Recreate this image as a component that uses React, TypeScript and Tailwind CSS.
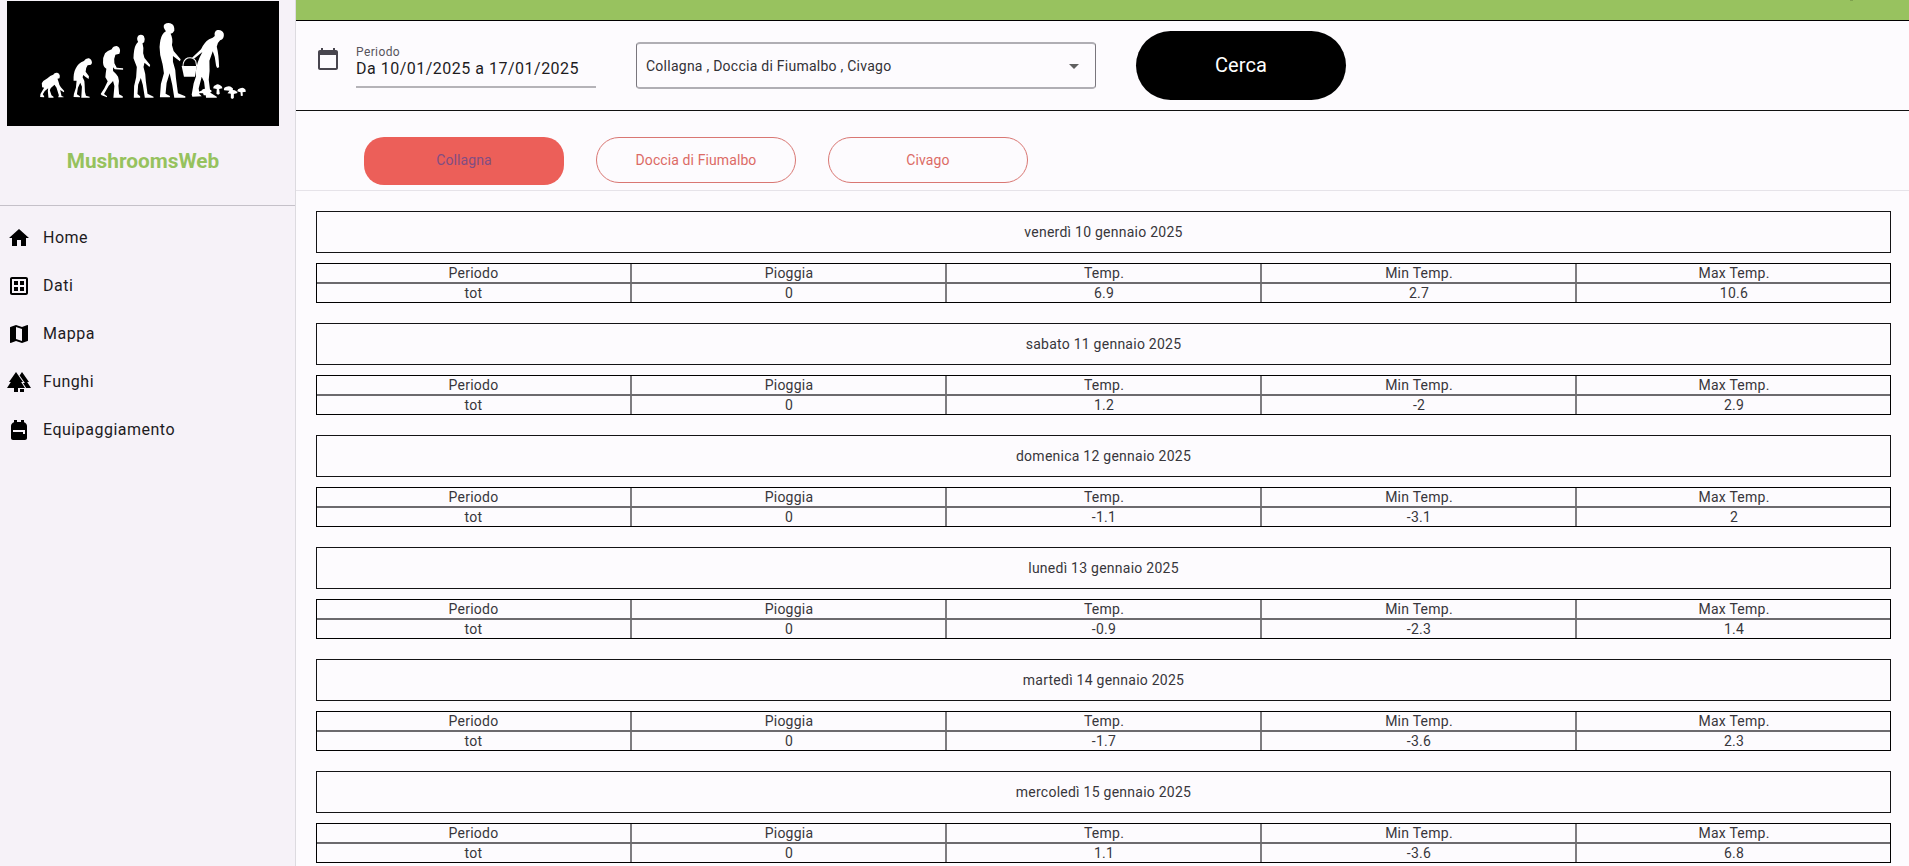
import type { ReactNode } from 'react';
import { MdArrowDropDown, MdBackpack, MdCalendarToday, MdForest, MdHome, MdMap, MdOutlineDataset } from 'react-icons/md';

const navItems: { label: string; icon: ReactNode }[] = [
  { label: 'Home', icon: <MdHome size={24} /> },
  { label: 'Dati', icon: <MdOutlineDataset size={24} /> },
  { label: 'Mappa', icon: <MdMap size={24} /> },
  { label: 'Funghi', icon: <MdForest size={24} /> },
  { label: 'Equipaggiamento', icon: <MdBackpack size={24} /> },
];

const columns = ['Periodo', 'Pioggia', 'Temp.', 'Min Temp.', 'Max Temp.'];

const days = [
  { date: 'venerdì 10 gennaio 2025', values: ['tot', '0', '6.9', '2.7', '10.6'] },
  { date: 'sabato 11 gennaio 2025', values: ['tot', '0', '1.2', '-2', '2.9'] },
  { date: 'domenica 12 gennaio 2025', values: ['tot', '0', '-1.1', '-3.1', '2'] },
  { date: 'lunedì 13 gennaio 2025', values: ['tot', '0', '-0.9', '-2.3', '1.4'] },
  { date: 'martedì 14 gennaio 2025', values: ['tot', '0', '-1.7', '-3.6', '2.3'] },
  { date: 'mercoledì 15 gennaio 2025', values: ['tot', '0', '1.1', '-3.6', '6.8'] },
];

function Logo() {
  return (
    <svg viewBox="21 3 813 375" className="ml-[7px] mt-px h-[125px] w-[272px] shrink-0 bg-black" preserveAspectRatio="none" fill="#fff">
      <path d="M125 250Q130 241 142 235Q150 226 159 224Q163 217 171 218Q178 220 179 227L178 235L172 236L175 245Q177 256 182 262L192 273L191 277L180 270L184 288L190 290V292H174L176 286L169 263L163 254L152 264L149 271L154 286L160 290V293H145L143 273L144 265L134 273L128 283L132 289V292L120 291L121 282L132 263L126 262Z" />
      <path d="M220 242Q219 219 226 206Q233 190 251 183Q256 174 266 175Q275 179 275 189L272 194L262 196Q257 202 256 215L266 229L265 237L255 230L249 225L247 232Q254 243 253 253L254 276L257 287L268 290V293H243L245 260L240 248L233 263L230 283L239 289V292L220 291L221 282L227 263L229 242Z" />
      <path d="M308 188Q307 172 314 160Q321 152 334 148Q338 138 349 138Q359 141 359 153L357 161L345 164Q340 174 342 190L349 203L368 205V209L343 208L338 202L338 213Q346 220 353 230Q358 242 354 257L356 283L367 289V293H339L342 258L338 243L325 257L311 282L320 289V292L304 286L301 282L312 265L322 244L315 232Q316 218 318 206Q309 201 308 188Z" />
      <path d="M399 175Q400 145 406 135Q410 128 413 126Q407 115 413 107Q422 101 430 108Q435 117 431 127L426 130Q430 142 428 160L432 174L449 195L447 201L432 188L429 201Q436 222 436 244L441 281L459 290V293H433L427 255L421 234L413 254L411 282L419 289V293H400L401 258L407 232Q408 217 409 201Z" />
      <path d="M477 141Q479 115 485 105Q489 98 496 94Q485 80 492 73Q503 65 515 73Q522 78 521 92L516 99L510 101Q518 116 514 135L519 153L540 178L538 184L517 168L517 185Q526 208 526 235L532 280L554 289V293H521L515 255L507 220L498 249L495 281L508 288V292H478L481 252L490 220Q486 190 485 189Q477 165 477 141Z" />
      <path d="M574 173L601 148Q610 128 625 118Q638 113 642 108Q639 94 650 90Q664 88 669 101Q671 116 658 121Q650 128 648 140Q654 163 655 202L649 204L646 197L642 171L636 154L626 182Q628 213 624 239L629 278L648 290V293H616L610 245L603 230L594 265L596 282L603 289L575 290L573 284L579 250L586 229Q583 205 596 174L605 156L580 176Z" />
      <path d="M543 198L588 198L583 230H550Z" />
      <path d="M547 199Q547 180 561 174Q577 170 585 183L588 199" fill="none" stroke="#fff" strokeWidth="3" />
      <path d="M590 279Q592 274 602 272Q608 263 622 269Q632 267 633 274Q632 278 619 278L617 286H609L607 280Z" />
      <path d="M637 265Q638 256 645 255Q650 250 657 255Q664 257 665 265L655 267L657 281L652 284L647 281L648 267Z" />
      <path d="M669 267Q670 261 677 260Q687 257 692 262Q699 266 696 270Q708 271 710 279L699 282V294L694 297L690 294V281L680 280L686 272L670 271Z" />
      <path d="M709 274Q710 266 718 265Q725 261 729 265Q735 268 735 275L725 277L726 287L720 288L719 277Z" />
    </svg>
  );
}

function Sidebar() {
  return (
    <aside className="flex w-[296px] shrink-0 flex-col border-r border-[#dddbe0] bg-[#f6f2f8]">
      <Logo />
      <div className="flex h-[80px] items-center justify-center border-b border-[#c5c1c9] pr-[9px] pb-[7px]">
        <h1 className="text-[20.8px] font-bold text-[#96c25e]">MushroomsWeb</h1>
      </div>
      <nav className="flex flex-col pt-[8px]">
        {navItems.map((item) => (
          <a key={item.label} className="flex h-12 items-center gap-3 pl-[7px] text-[16px] tracking-[0.5px] text-[#1d1b1e]">
            <span className="text-black">{item.icon}</span>
            {item.label}
          </a>
        ))}
      </nav>
    </aside>
  );
}

function Filters() {
  return (
    <section className="flex h-[90px] shrink-0 items-start border-b border-[#111] pl-[20px]">
      <MdCalendarToday size={24} className="mt-[26px] text-[#48454e]" />
      <div className="ml-[16px] mt-[23px] h-[44px] w-[240px] border-b-2 border-[#b5b3b8]">
        <div className="text-[12px] leading-[16px] tracking-[0.4px] text-[#57545c]">Periodo</div>
        <div className="text-[16px] leading-[18px] tracking-[0.5px] text-[#1d1b1e]">Da 10/01/2025 a 17/01/2025</div>
      </div>
      <div className="ml-[40px] mt-[21px] flex h-[47px] w-[460px] items-center justify-between rounded-[4px] border border-y-2 border-x-[#79767d] border-y-[#b0aeb4] pl-[9px] pr-[9px]">
        <span className="pt-[2px] text-[14px] tracking-[0.25px] text-[#333136]">Collagna , Doccia di Fiumalbo , Civago</span>
        <MdArrowDropDown size={24} className="text-[#606060]" />
      </div>
      <button className="ml-[40px] mt-[10px] h-[69px] w-[210px] rounded-full bg-black pb-[2px] text-[20px] tracking-[0.1px] text-white">Cerca</button>
    </section>
  );
}

function StationTabs() {
  return (
    <section className="flex h-[80px] shrink-0 items-start gap-8 border-b border-[#e6e3e9] pl-[68px] pt-[26px] text-[14px] tracking-[0.1px] text-[#dc6a65]">
      <button className="h-[48px] w-[200px] rounded-[20px] bg-[#ec5f59] pb-[2px] text-[#814d83]">Collagna</button>
      <button className="h-[46px] w-[200px] rounded-full border border-[#d97773]">Doccia di Fiumalbo</button>
      <button className="h-[46px] w-[200px] rounded-full border border-[#d97773]">Civago</button>
    </section>
  );
}

function Row({ cells }: { cells: string[] }) {
  return (
    <div className="-mx-px grid h-[18px] grid-cols-5 text-center leading-[19px]">
      {cells.map((cell, i) => (
        <div key={i} className={i === 0 ? 'h-[18px]' : '-ml-px h-[18px] border-l-2 border-[#7e7c80]'}>
          {cell}
        </div>
      ))}
    </div>
  );
}

export default function App() {
  return (
    <div className="flex h-[866px] w-[1909px] overflow-hidden bg-[#fdfbfe] font-['Roboto',sans-serif]">
      <Sidebar />
      <main className="flex min-w-0 flex-1 flex-col">
        <header className="flex h-[21px] shrink-0 items-start justify-end border-b border-black bg-[#98c25f] pr-[56px]">
          <span className="h-px w-[3px] bg-[#7fa34f]" />
        </header>
        <Filters />
        <StationTabs />
        <div className="flex flex-col gap-5 pl-5 pr-[18px] pt-5 text-[14px] tracking-[0.25px] text-[#38363b]">
          {days.map((day) => (
            <article key={day.date} className="flex flex-col gap-[10px]">
              <h2 className="flex h-[42px] items-center justify-center border border-[#141315]">{day.date}</h2>
              <div className="h-[40px] border border-black">
                <Row cells={columns} />
                <div className="border-t-2 border-[#6c6a6e]">
                  <Row cells={day.values} />
                </div>
              </div>
            </article>
          ))}
        </div>
      </main>
    </div>
  );
}
